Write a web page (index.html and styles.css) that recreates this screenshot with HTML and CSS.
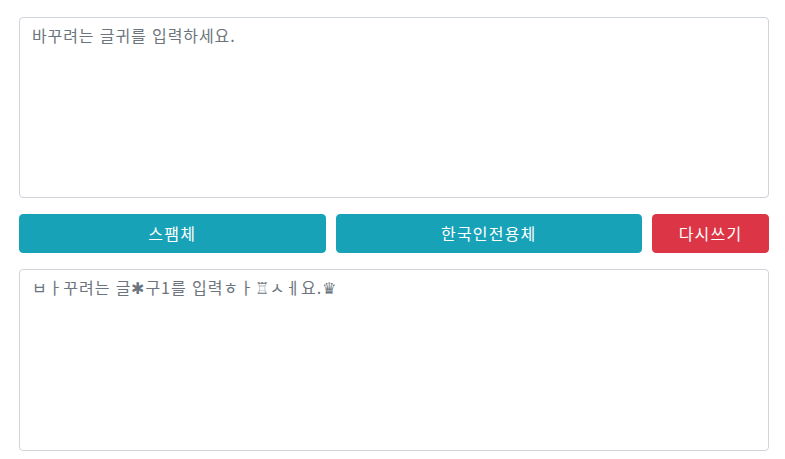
FILE: index.html
```html
<!DOCTYPE html>
<html lang="ko">
<head>
<meta charset="utf-8">
<title>글귀 바꾸기</title>
<link rel="stylesheet" href="styles.css">
</head>
<body>
<div class="wrap">
  <textarea class="box" placeholder="바꾸려는 글귀를 입력하세요."></textarea>
  <div class="actions">
    <button class="btn btn-info btn-grow">스팸체</button>
    <button class="btn btn-info btn-grow">한국인전용체</button>
    <button class="btn btn-danger btn-reset">다시쓰기</button>
  </div>
  <textarea class="box result">ㅂㅏ꾸려는 글✱구1를 입력ㅎㅏ♖ㅅㅔ요.♛</textarea>
</div>
</body>
</html>
```
FILE: styles.css
```css
html, body {
  margin: 0;
  padding: 0;
  background: #fff;
}
body {
  font-family: "Noto Sans CJK KR", "Noto Sans", sans-serif;
}
.wrap {
  width: 750px;
  padding: 17px 0 0 19px;
  display: flex;
  flex-direction: column;
  gap: 16px;
}
.box {
  display: block;
  box-sizing: border-box;
  width: 100%;
  height: 181px;
  margin: 0;
  padding: 5px 12px 6px;
  border: 1px solid #ced4da;
  border-radius: 4px;
  font-family: inherit;
  font-size: 16px;
  line-height: 24px;
  color: #495057;
  resize: none;
  outline: none;
  letter-spacing: 0.9px;
}
.box::placeholder {
  color: #6c757d;
  opacity: 1;
}
.result {
  height: 182px;
  color: #6c757d;
  letter-spacing: 0.95px;
}
.actions {
  display: flex;
  gap: 10px;
}
.btn {
  box-sizing: border-box;
  height: 39px;
  border: 1px solid transparent;
  border-radius: 4px;
  color: #fff;
  font-family: inherit;
  font-size: 16px;
  padding: 0 12px 2px;
  letter-spacing: 1.2px;
}
.btn-info {
  background: #17a2b8;
  border-color: #17a2b8;
}
.btn-danger {
  background: #dc3545;
  border-color: #dc3545;
}
.btn-grow {
  flex: 1 1 0;
}
.btn-reset {
  width: 117px;
  flex: 0 0 117px;
}
```
